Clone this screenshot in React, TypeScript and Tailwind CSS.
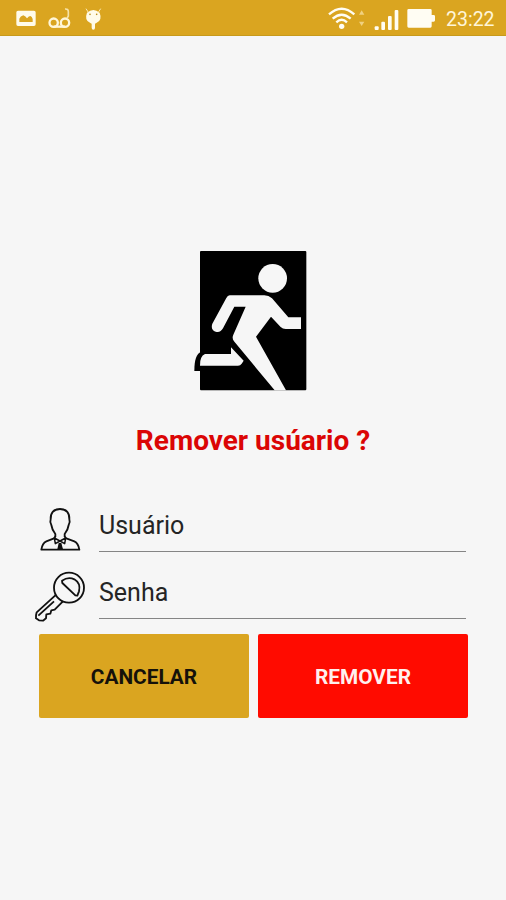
import React from "react";

function StatusBar() {
  return (
    <header className="flex h-9 items-start justify-between border-b border-[#c79a1c] bg-[#daa520]">
      <svg width="130" height="35" viewBox="0 0 390 105" fill="none">
        <path
          fillRule="evenodd"
          fill="#fffbea"
          d="M54 32h48q5 0 5 5v36q0 5-5 5H54q-5 0-5-5V37q0-5 5-5zM58 66V56q3-8 12-10 7 3 11 9 6-7 10-7 5 2 7 9v9z"
        />
        <g stroke="#fff6d8" strokeWidth="7">
          <circle cx="161" cy="68" r="12.5" />
          <circle cx="195" cy="68" r="12.5" />
          <path d="M161 80h34" />
          <path d="M195 27q10-1 10 8v13l-4 7" strokeWidth="5" stroke="#f7e3a8" />
        </g>
        <path fill="#fffbea" d="M261 38q19-16 38 0 9 23-10 31l-4 2v12q0 6-5 6t-5-6V71l-4-2q-19-8-10-31z" />
        <path stroke="#fbe9b5" strokeWidth="3" d="M265 37l-7-11M295 37l7-11" />
        <circle cx="270" cy="43" r="2.5" fill="#b98a13" />
        <circle cx="290" cy="43" r="2.5" fill="#b98a13" />
      </svg>
      <div className="flex">
        <svg width="120" height="35" viewBox="0 0 360 105" fill="none">
          <g stroke="#fffdf3" strokeWidth="7">
            <path d="M27 43q38-34 76 0M38 56q27-24 54 0M49 67q16-15 32 0" />
          </g>
          <circle cx="65" cy="79" r="8" fill="#fffdf3" />
          <path fill="#f0d180" d="M117 44l8-13 8 13zM117 65l8 13 8-13z" />
          <g fill="#fffdf3">
            <rect x="164" y="79" width="12" height="11" rx="3" />
            <rect x="184" y="65" width="11" height="25" rx="3" />
            <rect x="204" y="48" width="11" height="42" rx="3" />
            <rect x="224" y="30" width="11" height="60" rx="3" />
            <path d="M266 27h65q4 0 4 4v14h6q4 0 4 4v12q0 4-4 4h-6v14q0 4-4 4h-65q-4 0-4-4V31q0-4 4-4z" />
          </g>
        </svg>
        <span className="w-[66px] pl-[6px] pt-2 text-[19.5px] leading-6 text-[#fff6d8]">23:22</span>
      </div>
    </header>
  );
}

function ExitIcon() {
  return (
    <svg width="130" height="160" viewBox="0 0 390 480" className="ml-[185px]">
      <rect x="45" y="33" width="319" height="418" rx="3" fill="#000" />
      <path fill="#000" d="M48 336q-20 7-20 57h20l40-8z" />
      <g fill="#f6f6f6">
        <circle cx="263" cy="115" r="43" />
        <path d="M134 166H238q13 0 23 9l49 57h38v35h-46q-9 0-15-6l-29-31-45 60 90 161h-34L147 304q-7-9-2-20l37-84h-34l-34 65q-8 14-22 10-16-6-10-24l42-77q4-8 10-8z" />
        <path d="M60 342h78v-20l38 40-6 9q-4 6-11 6H45q-1-28 15-35z" />
      </g>
    </svg>
  );
}

function UserIcon() {
  return (
    <svg width="69" height="60" viewBox="0 0 207 180" fill="none" stroke="#111" strokeWidth="5.5" strokeLinejoin="round">
      <path d="M90 27c-20 0-29 13-28 31-2 5-1 12 2 17 2 14 7 21 12 27v9M90 27c20 0 29 13 28 31 2 5 1 12-2 17-2 14-7 21-12 27v9" />
      <path d="M76 110l-4 5-23 9q-12 5-15 25h114q-3-20-15-25l-24-9-5-5" />
      <path d="M73 114l17 9-14 8zM107 114l-17 9 14 8z" strokeWidth="4.5" />
      <path d="M86 129h8l5 19H82z" fill="#111" stroke="none" />
    </svg>
  );
}

function KeyIcon() {
  return (
    <svg width="69" height="66" viewBox="0 194 207 198" fill="none" stroke="#111" strokeWidth="5.5" strokeLinejoin="round">
      <circle cx="117" cy="262" r="45" />
      <path d="M96 241q19-13 37-4 20 12 14 36l-5 13-6-1-39-37z" />
      <path d="M76 285l-56 51q-3 9-2 18l9 6 12 1 9-7 1-12 12-2 3-10 10-2 24-24M25 346l47-43" />
      <path d="M74 284l24 21" strokeWidth="3" />
    </svg>
  );
}

function Field({ label }: { label: string }) {
  return (
    <label className="block h-full w-[367px] border-b border-[#858585] text-[25px] leading-[30px] text-[#252525]">
      {label}
    </label>
  );
}

export default function App() {
  return (
    <div className="h-[900px] w-[506px] overflow-hidden bg-[#f6f6f6] font-['Roboto',sans-serif]">
      <StatusBar />
      <main className="pt-[204px]">
        <ExitIcon />
        <h1 className="mt-[25px] text-center text-[28px] font-bold leading-8 text-[#db0505]">Remover usúario ?</h1>
        <form className="pt-[43px]">
          <div className="flex h-[67px] pl-[30px]">
            <UserIcon />
            <div className="h-[52px] pt-[11px]"><Field label="Usuário" /></div>
          </div>
          <div className="flex h-[67px] pl-[30px]">
            <div className="-mt-[2px]"><KeyIcon /></div>
            <div className="h-[52px] pt-[11px]"><Field label="Senha" /></div>
          </div>
          <div className="flex gap-[9px] pl-[39px]">
            <button type="button" className="h-[84px] w-[210px] rounded-[2px] bg-[#daa520] pt-[3px] text-[20.8px] font-bold text-[#15110a]">CANCELAR</button>
            <button type="button" className="h-[84px] w-[210px] rounded-[2px] bg-[#ff0b00] pt-[3px] text-[20.8px] font-bold text-[#fff0ee]">REMOVER</button>
          </div>
        </form>
      </main>
    </div>
  );
}
